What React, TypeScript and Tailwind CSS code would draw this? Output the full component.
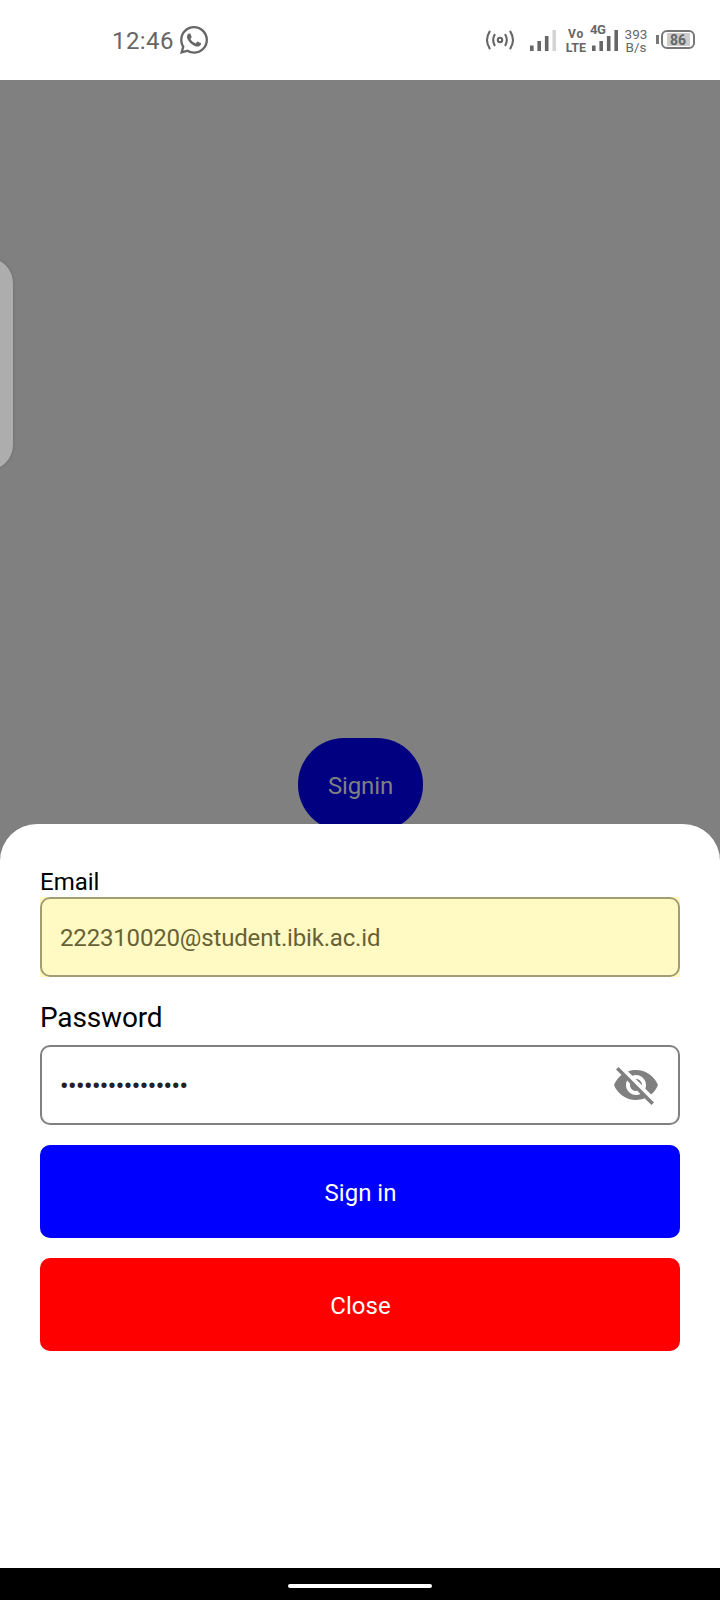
import type { ReactNode } from "react";
import { MdVisibilityOff } from "react-icons/md";
import { FaWhatsapp } from "react-icons/fa";

function HotspotIcon() {
  return (
    <svg width="30" height="20" viewBox="0 0 30 20" fill="none" stroke="#666" strokeWidth="2.1" strokeLinecap="round">
      <circle cx="15" cy="10" r="2.2" />
      <path d="M9.6 4.8Q6.8 10 9.6 15.2M20.4 4.8Q23.2 10 20.4 15.2M4.6 1.6Q-.6 10 4.6 18.4M25.4 1.6Q30.6 10 25.4 18.4" />
    </svg>
  );
}

function SignalIcon({ faded = false }: { faded?: boolean }) {
  return (
    <svg width="26" height="21" viewBox="0 0 26 21" fill="#666">
      <rect x="0" y="15.5" width="3.6" height="5.5" />
      <rect x="7.4" y="11" width="3.6" height="10" />
      <rect x="14.9" y="6" width="3.6" height="15" />
      <rect x="22.4" y="0" width="3.6" height="21" fill={faded ? "#d4d4d4" : "#666"} />
    </svg>
  );
}

function StatusBar() {
  return (
    <header className="relative flex h-20 shrink-0 bg-white pt-[26px] text-[#666]">
      <div className="ml-[112px] flex h-7 w-[96px] items-center justify-between">
        <span className="pt-[2px] text-[24px] leading-7 tracking-[0.4px]">12:46</span>
        <FaWhatsapp className="-mr-[2px] size-[32px] shrink-0" />
      </div>
      <div className="ml-[277px] flex">
        <div className="mt-1"><HotspotIcon /></div>
        <div className="ml-[15px] mt-1"><SignalIcon faded /></div>
        <div className="ml-[9px] mt-[2px] flex w-[22px] flex-col items-center font-bold">
          <span className="text-[12px] leading-[12px] tracking-[0.8px]">Vo</span>
          <span className="text-[12.5px] leading-[15px] tracking-[0.1px]">LTE</span>
        </div>
        <div className="relative ml-[5px] mt-1">
          <SignalIcon />
          <span className="absolute -left-[2px] -top-[6px] text-[13px] font-bold leading-[12px] tracking-[-0.5px]">4G</span>
        </div>
        <div className="ml-[6px] mt-[2px] flex w-6 flex-col items-center text-[13.5px] leading-[13px]">
          <span>393</span>
          <span>B/s</span>
        </div>
        <div className="ml-[8px] mt-1 flex h-[19px] items-center gap-[2px]">
          <span className="h-[9px] w-[3px] bg-[#777]" />
          <span className="flex h-[19px] w-[34px] items-center justify-center rounded-[6px] border-2 border-[#777] p-[1px]">
            <span className="flex h-full w-[23px] items-center justify-center bg-[#ccc] pt-[1px] text-[14px] font-bold leading-[13px]">86</span>
          </span>
        </div>
      </div>
    </header>
  );
}

function ActionButton({ className, children }: { className: string; children: ReactNode }) {
  return <button className={`h-[93px] w-full rounded-[10px] pl-[1px] pt-[2px] text-[24px] text-white ${className}`}>{children}</button>;
}

export default function App() {
  return (
    <div className="flex h-[1600px] w-[720px] flex-col overflow-hidden bg-white font-[Roboto,sans-serif] antialiased">
      <StatusBar />
      <main className="relative flex min-h-0 flex-1 flex-col bg-[#808080]">
        <div className="absolute -left-[37px] top-[178px] h-[212px] w-[50px] rounded-[28px] bg-[#adadad] shadow-[0_0_3px_#666]" />
        <div className="flex h-[744px] shrink-0 items-start justify-center pt-[658px]">
          <button className="h-[93px] w-[125px] shrink-0 rounded-[46px] bg-[#000080] pl-[1px] pt-[3px] text-[24px] tracking-[-0.15px] text-[#808080]">Signin</button>
        </div>
        <section className="relative flex flex-1 flex-col rounded-t-[37px] bg-white px-10 pt-[44px]">
          <label className="h-[29px] text-[24px] leading-[28px] text-black">Email</label>
          <div className="flex h-20 shrink-0 bg-[#fff9c4]">
            <div className="flex flex-1 items-center rounded-[10px] border-2 border-[#a29e72] pl-[18px] pt-[2px] text-[24px] tracking-[-0.17px] text-[#666235]">
              222310020@student.ibik.ac.id
            </div>
          </div>
          <label className="mt-[24px] h-[44px] text-[28px] leading-[34px] tracking-[-0.15px] text-black">Password</label>
          <div className="flex h-20 shrink-0 items-center justify-between rounded-[10px] border-2 border-[#808080] pl-[18px] pr-[18px]">
            <span className="pt-[1px] text-[24px] font-medium tracking-[-0.42px] text-[#222]">••••••••••••••••</span>
            <MdVisibilityOff className="size-12 text-[#808080]" />
          </div>
          <div className="mt-5 flex flex-col gap-5">
            <ActionButton className="bg-[#0000ff]">Sign in</ActionButton>
            <ActionButton className="bg-[#ff0000]">Close</ActionButton>
          </div>
        </section>
      </main>
      <footer className="flex h-8 shrink-0 justify-center bg-black pt-4">
        <div className="h-1 w-36 rounded-full bg-white" />
      </footer>
    </div>
  );
}
